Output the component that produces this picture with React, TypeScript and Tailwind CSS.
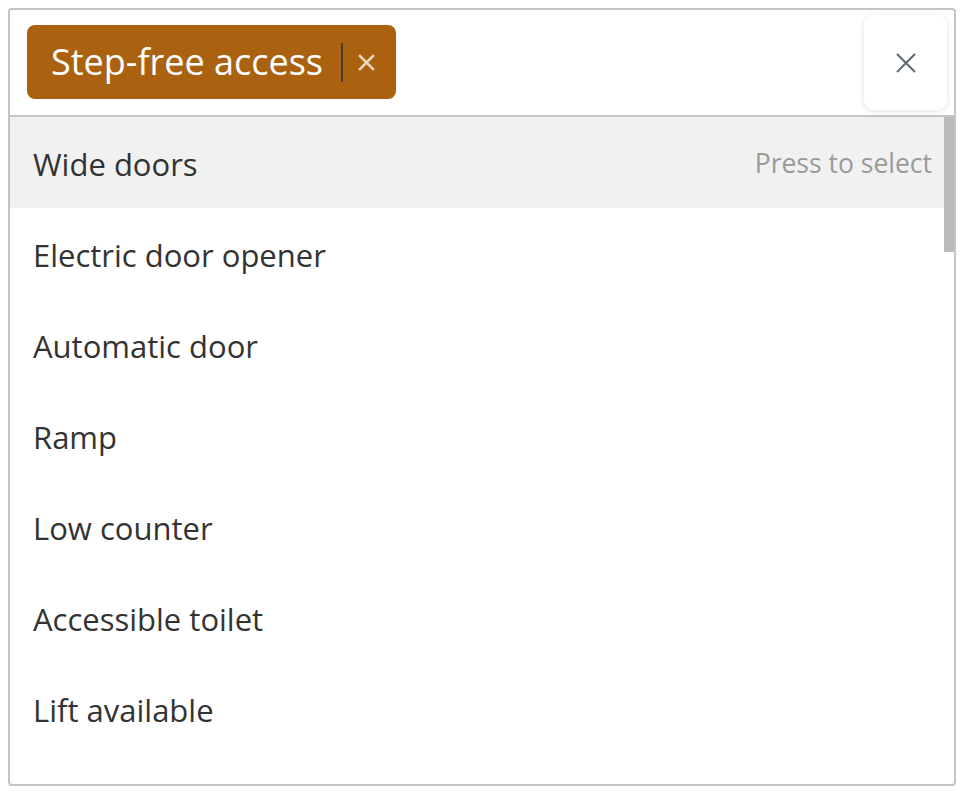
import React from 'react';

const options = [
  'Wide doors',
  'Electric door opener',
  'Automatic door',
  'Ramp',
  'Low counter',
  'Accessible toilet',
  'Lift available',
];

const App: React.FC = () => {
  return (
    <div className="w-[963px] h-[795px] bg-white pt-2 pl-2 font-['Open_Sans',sans-serif]">
      <div className="w-[948px] h-[778px] border-2 border-[#c4c4c4] rounded-[4px] flex flex-col overflow-hidden">
        {/* Selected values + clear button */}
        <div className="h-[107px] flex items-start justify-between pl-[17px] pr-[7px] pt-[5px] border-b-2 border-[#c4c4c4] shrink-0">
          <div className="mt-[10px] h-[74px] flex items-center bg-[#ab6210] rounded-[8px] pl-[24px] pr-[20px] text-white">
            <span className="text-[36px] font-medium leading-none">Step-free access</span>
            <span className="ml-[18px] w-[2px] h-[39px] bg-[#4a3a2a]" />
            <svg viewBox="0 0 18 18" className="ml-[14px] w-[19px] h-[19px] text-[#ead8c4]" fill="none" stroke="currentColor" strokeWidth={2.4}>
              <path d="M2 2l14 14M16 2L2 16" />
            </svg>
          </div>
          <button className="w-[83px] h-[95px] bg-white rounded-[10px] shadow-[0_1px_6px_rgba(0,0,0,0.12)] flex items-center justify-center text-[#5d6870]">
            <svg viewBox="0 0 20 20" className="w-[20px] h-[20px]" fill="none" stroke="currentColor" strokeWidth={2}>
              <path d="M1 1l18 18M19 1L1 19" />
            </svg>
          </button>
        </div>

        {/* Options list */}
        <div className="relative flex-1 overflow-hidden">
          <ul>
            {options.map((opt, i) => (
              <li
                key={opt}
                className={`h-[91px] flex items-center justify-between pl-[23px] pr-[22px] pt-[4px] text-[#333333] ${i === 0 ? 'bg-[#f1f1f1]' : 'bg-white'}`}
              >
                <span className="text-[31px]">{opt}</span>
                {i === 0 && <span className="text-[26.5px] text-[#9a9a9a] -mt-[2px]">Press to select</span>}
              </li>
            ))}
          </ul>
          <div className="absolute top-0 right-0 w-[10px] h-[135px] bg-[#bbbbbb]" />
        </div>
      </div>
    </div>
  );
};

export default App;
